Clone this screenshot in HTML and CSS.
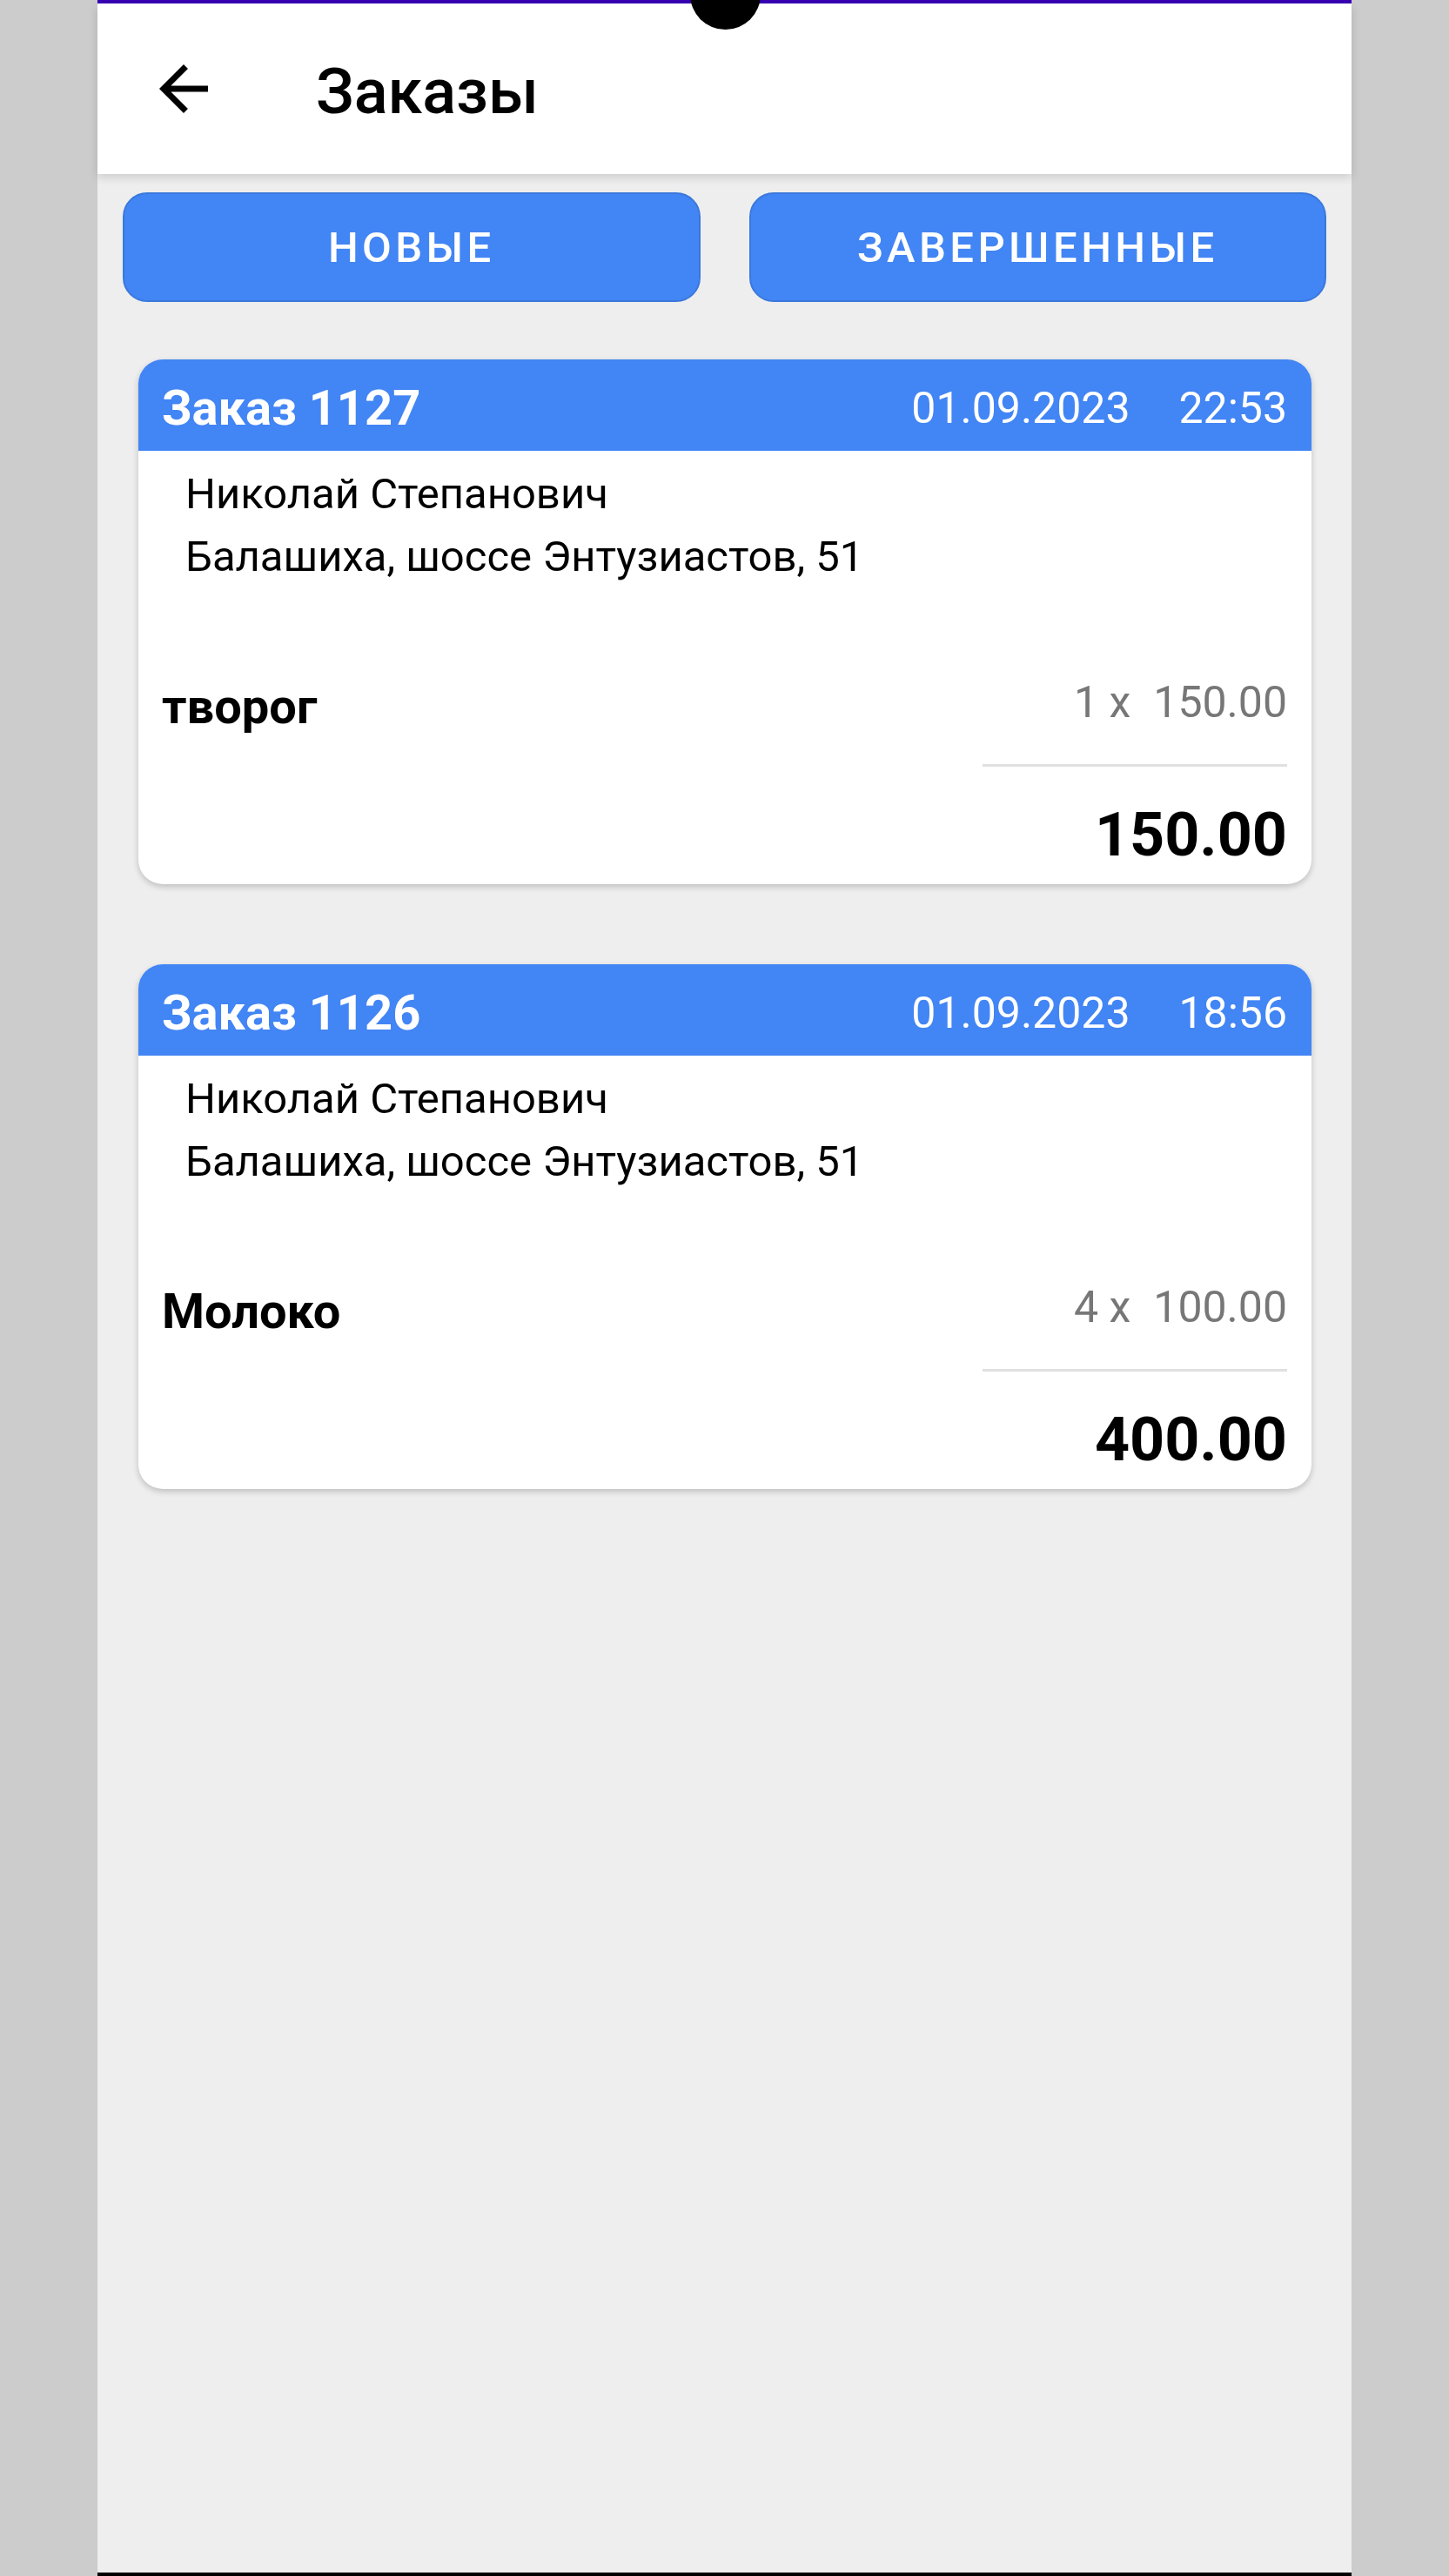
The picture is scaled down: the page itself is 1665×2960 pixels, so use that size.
FILE: index.html
```html
<!DOCTYPE html>
<html lang="ru">

<head>
    <meta charset="UTF-8">
    <title>Заказы</title>
    <link rel="stylesheet" href="styles.css">
</head>

<body>
    <div class="screen">
        <div class="statusbar">
            <div class="notch"></div>
        </div>

        <div class="toolbar">
            <svg class="back" viewBox="0 0 24 24">
                <path d="M20 11H7.83l5.59-5.59L12 4l-8 8 8 8 1.41-1.41L7.83 13H20v-2z" />
            </svg>
            <div class="title">Заказы</div>
        </div>

        <div class="tabs">
            <button class="tab">Новые</button>
            <button class="tab">Завершенные</button>
        </div>

        <div class="orders">
            <div class="card">
                <div class="card-head">
                    <span class="num">Заказ 1127</span>
                    <span class="date">01.09.2023</span>
                    <span class="time">22:53</span>
                </div>
                <div class="client">
                    <div>Николай Степанович</div>
                    <div>Балашиха, шоссе Энтузиастов, 51</div>
                </div>
                <div class="item">
                    <span class="item-name">творог</span>
                    <span class="qty">1 x<span class="price">150.00</span></span>
                </div>
                <div class="line"></div>
                <div class="total">150.00</div>
            </div>

            <div class="card">
                <div class="card-head">
                    <span class="num">Заказ 1126</span>
                    <span class="date">01.09.2023</span>
                    <span class="time">18:56</span>
                </div>
                <div class="client">
                    <div>Николай Степанович</div>
                    <div>Балашиха, шоссе Энтузиастов, 51</div>
                </div>
                <div class="item">
                    <span class="item-name">Молоко</span>
                    <span class="qty">4 x<span class="price">100.00</span></span>
                </div>
                <div class="line"></div>
                <div class="total">400.00</div>
            </div>
        </div>
    </div>
</body>

</html>
```

FILE: styles.css
```css
body {
    margin: 0;
    background: #ccc;
    font-family: Roboto, "Noto Sans", sans-serif;
}

.screen {
    box-sizing: border-box;
    width: 1441px;
    height: 2960px;
    margin: 0 auto;
    background: #eee;
    border-bottom: 4px solid #000;
}

.statusbar {
    position: relative;
    height: 4px;
    background: #3700b3;
}

.notch {
    position: absolute;
    left: 50%;
    top: -47px;
    width: 81px;
    height: 81px;
    margin-left: -40px;
    border-radius: 50%;
    background: #000;
    z-index: 3;
}

.toolbar {
    position: relative;
    z-index: 2;
    display: flex;
    align-items: center;
    height: 196px;
    padding-left: 57px;
    background: #fff;
    box-shadow: 0 4px 10px rgba(0, 0, 0, 0.14);
}

.back {
    width: 84px;
    height: 84px;
    fill: #000;
}

.title {
    margin-left: 110px;
    padding-top: 6px;
    font-size: 72px;
    font-weight: 500;
    color: #000;
}

.tabs {
    display: flex;
    gap: 56px;
    padding: 21px 29px 0;
}

.tab {
    flex: 1;
    height: 126px;
    border: 2px solid #3b78dc;
    border-radius: 28px;
    background: #4285f4;
    color: #fff;
    font-family: Roboto, sans-serif;
    font-size: 49px;
    font-weight: 500;
    letter-spacing: 0.09em;
    text-transform: uppercase;
}

.orders {
    display: flex;
    flex-direction: column;
    gap: 92px;
    padding: 66px 46px 0 47px;
}

.card {
    display: flex;
    flex-direction: column;
    background: #fff;
    border-radius: 28px;
    overflow: hidden;
    box-shadow: 0 3px 7px rgba(0, 0, 0, 0.2);
    padding-bottom: 16px;
}

.card-head {
    display: flex;
    align-items: center;
    height: 105px;
    box-sizing: border-box;
    padding: 6px 28px 0 27px;
    background: #4285f4;
    color: #fff;
}

.num {
    font-size: 56px;
    font-weight: 700;
}

.date {
    margin-left: auto;
    font-size: 50px;
}

.time {
    margin-left: 56px;
    font-size: 50px;
}

.client {
    padding: 14px 0 0 54px;
    font-size: 49px;
    line-height: 72px;
    color: #000;
}

.item {
    display: flex;
    justify-content: space-between;
    align-items: flex-start;
    margin-top: 103px;
    padding: 0 28px 0 27px;
}

.item-name {
    font-size: 56px;
    font-weight: 700;
    line-height: 66px;
}

.qty {
    font-size: 50px;
    line-height: 57px;
    color: #777;
}

.price {
    margin-left: 26px;
}

.line {
    align-self: flex-end;
    width: 350px;
    height: 3px;
    margin: 33px 28px 0 0;
    background: #e0e0e0;
}

.total {
    align-self: flex-end;
    margin: 37px 28px 0 0;
    font-size: 70px;
    font-weight: 700;
    line-height: 82px;
    color: #000;
}
```
